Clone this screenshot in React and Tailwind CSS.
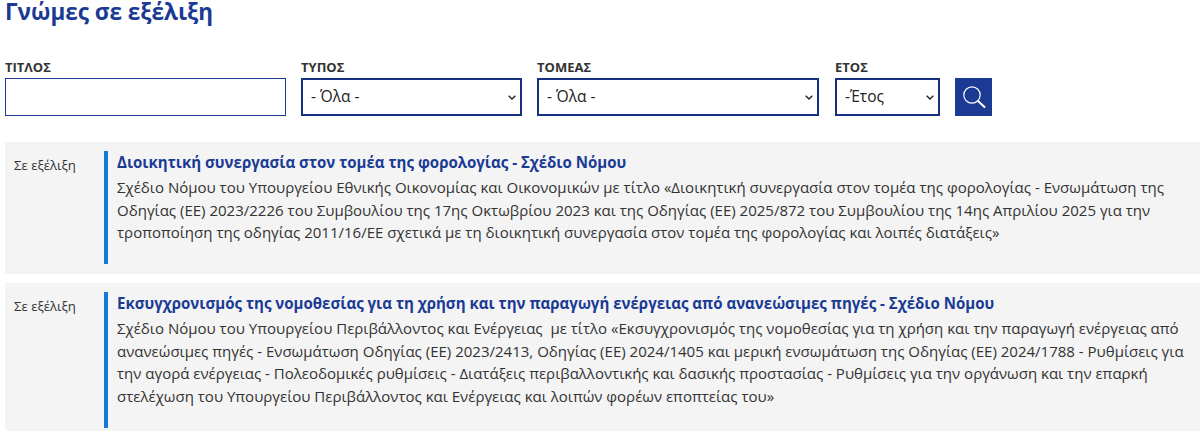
import React from "react";

const items = [
  {
    id: 1,
    title: "Διοικητική συνεργασία στον τομέα της φορολογίας - Σχέδιο Νόμου",
    description:
      "Σχέδιο Νόμου του Υπουργείου Εθνικής Οικονομίας και Οικονομικών με τίτλο «Διοικητική συνεργασία στον τομέα της φορολογίας - Ενσωμάτωση της Οδηγίας (ΕΕ) 2023/2226 του Συμβουλίου της 17ης Οκτωβρίου 2023 και της Οδηγίας (ΕΕ) 2025/872 του Συμβουλίου της 14ης Απριλίου 2025 για την τροποποίηση της οδηγίας 2011/16/ΕΕ σχετικά με τη διοικητική συνεργασία στον τομέα της φορολογίας και λοιπές διατάξεις»",
  },
  {
    id: 2,
    title:
      "Εκσυγχρονισμός της νομοθεσίας για τη χρήση και την παραγωγή ενέργειας από ανανεώσιμες πηγές - Σχέδιο Νόμου",
    description:
      "Σχέδιο Νόμου του Υπουργείου Περιβάλλοντος και Ενέργειας  με τίτλο «Εκσυγχρονισμός της νομοθεσίας για τη χρήση και την παραγωγή ενέργειας από ανανεώσιμες πηγές - Ενσωμάτωση Οδηγίας (ΕΕ) 2023/2413, Οδηγίας (ΕΕ) 2024/1405 και μερική ενσωμάτωση της Οδηγίας (ΕΕ) 2024/1788 - Ρυθμίσεις για την αγορά ενέργειας - Πολεοδομικές ρυθμίσεις - Διατάξεις περιβαλλοντικής και δασικής προστασίας - Ρυθμίσεις για την οργάνωση και την επαρκή στελέχωση του Υπουργείου Περιβάλλοντος και Ενέργειας και λοιπών φορέων εποπτείας του»",
  },
];

const Filter = ({ label, width, options }) => (
  <div className={`flex flex-col ${width}`}>
    <label className="h-[20px] text-[13px] leading-[18px] font-bold text-[#333]">{label}</label>
    <div className="relative">
      <select className="h-[38px] w-full appearance-none border-2 border-[#14307f] bg-white pl-[8px] text-[15.5px] text-[#222]">
        {options.map((o) => (
          <option key={o}>{o}</option>
        ))}
      </select>
      {/* chevron over the select */}
      <svg
        className="pointer-events-none absolute top-[17px] right-[6px]"
        width="8"
        height="5"
        viewBox="0 0 8 5"
        fill="none"
        stroke="#222"
        strokeWidth="1.4"
      >
        <path d="M.7.7 4 4l3.3-3.3" />
      </svg>
    </div>
  </div>
);

export default function App() {
  return (
    <div className="h-[431px] overflow-hidden bg-white pl-[5px] font-['Open_Sans',sans-serif]">
      <h2 className="h-[58px] text-[22.5px] leading-[24px] font-bold text-[#1a3a94]">
        Γνώμες σε εξέλιξη
      </h2>

      <div className="flex items-end">
        <div className="flex w-[281px] flex-col">
          <label className="h-[20px] text-[13px] leading-[18px] font-bold text-[#333]">ΤΙΤΛΟΣ</label>
          <input type="text" className="h-[38px] border border-[#1a3a94] bg-white" />
        </div>
        <div className="ml-[15px]">
          <Filter label="ΤΥΠΟΣ" width="w-[221px]" options={["- Όλα -"]} />
        </div>
        <div className="ml-[15px]">
          <Filter label="ΤΟΜΕΑΣ" width="w-[282px]" options={["- Όλα -"]} />
        </div>
        <div className="ml-[16px]">
          <Filter label="ΕΤΟΣ" width="w-[105px]" options={["-Έτος"]} />
        </div>
        <button className="ml-[15px] flex h-[38px] w-[37px] items-center justify-center bg-[#1a3a94]">
          <svg width="26" height="26" viewBox="0 0 26 26" fill="none" stroke="#fff" strokeLinecap="round">
            <circle cx="11" cy="11" r="8.2" strokeWidth="1.2" />
            <path d="M17 17l6.5 6" strokeWidth="2" />
          </svg>
        </button>
      </div>

      <div className="mt-[26px] flex flex-col gap-[9px]">
        {items.map((item) => (
          <div key={item.id} className="flex bg-[#f4f4f4] pt-[9px] pb-[10px] pl-[9px]">
            <div className="w-[90px] shrink-0 pt-[5px] text-[13.2px] leading-[18px] text-[#333]">
              Σε εξέλιξη
            </div>
            <div className="flex-1 border-l-4 border-[#1479d9] pr-[14px] pb-[20.5px] pl-[9px]">
              <h3 className="text-[15.05px] leading-[22px] font-bold text-[#1a3a94]">{item.title}</h3>
              <p className="mt-[3px] text-[15.03px] leading-[22.5px] whitespace-pre-wrap text-[#333]">
                {item.description}
              </p>
            </div>
          </div>
        ))}
      </div>
    </div>
  );
}
